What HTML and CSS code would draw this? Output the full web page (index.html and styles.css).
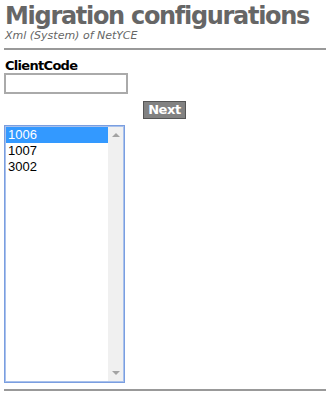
FILE: index.html
```html
<!DOCTYPE html>
<html lang="en">
<head>
    <meta charset="UTF-8">
    <title>Migration configurations</title>
    <link rel="stylesheet" href="styles.css">
</head>
<body>
    <h1 class="title">Migration configurations</h1>
    <p class="sub">Xml (System) of NetYCE</p>
    <hr>
    <div class="field">
        <label class="lbl" for="cc">ClientCode</label>
        <input type="text" id="cc" class="txt">
    </div>
    <div class="btnrow">
        <button class="next">Next</button>
    </div>
    <div class="codes">
        <ul class="opts">
            <li class="sel">1006</li>
            <li>1007</li>
            <li>3002</li>
        </ul>
        <div class="sbar">
            <span class="arr up"></span>
            <span class="arr down"></span>
        </div>
    </div>
    <hr>
</body>
</html>
```
FILE: styles.css
```css
* {
    margin: 0;
    padding: 0;
}
body {
    margin: 4px;
    font-family: Verdana, "DejaVu Sans", sans-serif;
    font-size: 13px;
    color: #000;
}
.title {
    font-size: 24px;
    letter-spacing: -1.3px;
    white-space: nowrap;
    font-weight: bold;
    color: #666;
    line-height: 25px;
    padding-left: 1px;
}
.sub {
    font-size: 11px;
    font-style: italic;
    color: #666;
    line-height: 13px;
    padding-left: 1px;
}
hr {
    border: none;
    border-top: 2px solid #999;
    margin-top: 6px;
}
.field {
    margin-top: 9px;
}
.lbl {
    display: block;
    font-weight: bold;
    font-size: 13px;
    letter-spacing: -0.7px;
    line-height: 14px;
    padding-left: 1px;
}
.txt {
    display: block;
    width: 124px;
    height: 21px;
    border: 2px solid #aaa;
    box-sizing: border-box;
}
.btnrow {
    padding-left: 139px;
    margin-top: 7px;
}
.next {
    width: 43px;
    height: 18px;
    background: #828282;
    border: 1px solid #555;
    color: #fff;
    font-family: Verdana, "DejaVu Sans", sans-serif;
    font-weight: bold;
    font-size: 13px;
    letter-spacing: -0.4px;
    line-height: 14px;
}
.codes {
    display: flex;
    margin-top: 6px;
    width: 121px;
    height: 258px;
    box-sizing: border-box;
    border: 1px solid #7a9ee0;
    box-shadow: inset 0 0 0 1px #a9c1ec;
    padding: 1px;
    font-family: Arial, "Liberation Sans", sans-serif;
    font-size: 13px;
}
.opts {
    flex: 1;
    list-style: none;
}
.opts li {
    height: 16px;
    line-height: 16px;
    padding-left: 2px;
}
.opts .sel {
    background: #3399ff;
    color: #fff;
}
.sbar {
    width: 15px;
    background: #f0f0f0;
    display: flex;
    flex-direction: column;
    justify-content: space-between;
    align-items: center;
    padding: 6px 0;
}
.arr {
    width: 0;
    height: 0;
    border-left: 4px solid transparent;
    border-right: 4px solid transparent;
}
.up {
    border-bottom: 4px solid #a3a3a3;
}
.down {
    border-top: 4px solid #a3a3a3;
}
```
